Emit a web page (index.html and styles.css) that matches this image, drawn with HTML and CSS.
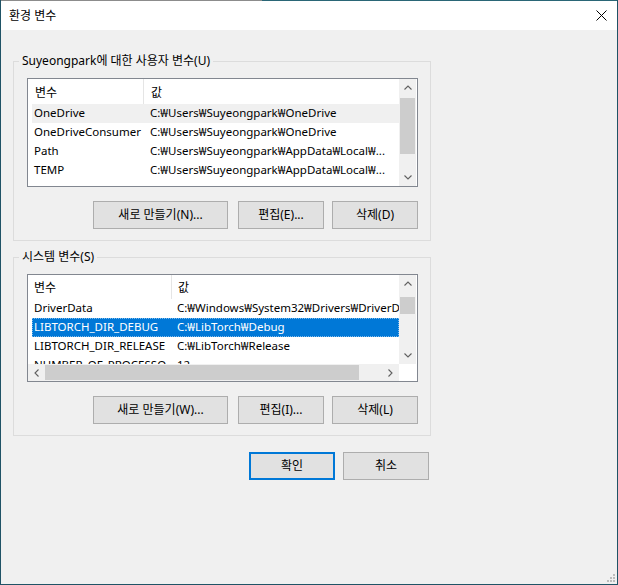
FILE: index.html
```html
<!DOCTYPE html>
<html lang="ko">
<head>
<meta charset="utf-8">
<title>환경 변수</title>
<link rel="stylesheet" href="styles.css">
</head>
<body>
<div class="window">
  <div class="titlebar">
    <span class="title">환경 변수</span>
    <svg class="close" width="11" height="11" viewBox="0 0 11 11"><path d="M0.5 0.5 L10.5 10.5 M10.5 0.5 L0.5 10.5" stroke="#000" stroke-width="1" fill="none"/></svg>
  </div>
  <div class="content">
    <fieldset class="group group--user">
      <legend>Suyeongpark에 대한 사용자 변수(U)</legend>
      <div class="lv lv--user">
        <div class="lv-main">
          <div class="lv-view">
            <div class="lv-head"><div class="hc hc1">변수</div><div class="hc">값</div></div>
            <div class="row row--inactive"><div class="c1">OneDrive</div><div class="c2">C:₩Users₩Suyeongpark₩OneDrive</div></div>
            <div class="row"><div class="c1">OneDriveConsumer</div><div class="c2">C:₩Users₩Suyeongpark₩OneDrive</div></div>
            <div class="row"><div class="c1">Path</div><div class="c2">C:₩Users₩Suyeongpark₩AppData₩Local₩...</div></div>
            <div class="row"><div class="c1">TEMP</div><div class="c2">C:₩Users₩Suyeongpark₩AppData₩Local₩...</div></div>
          </div>
          <div class="vscroll">
            <div class="sb-btn"><svg width="8" height="5" viewBox="0 0 8 5"><polyline points="0.5,4.5 4,1 7.5,4.5" fill="none" stroke="#606060" stroke-width="1.1"/></svg></div>
            <div class="sb-track"><div class="thumb thumb--user"></div></div>
            <div class="sb-btn"><svg width="8" height="5" viewBox="0 0 8 5"><polyline points="0.5,0.5 4,4 7.5,0.5" fill="none" stroke="#606060" stroke-width="1.1"/></svg></div>
          </div>
        </div>
      </div>
      <div class="btn-row">
        <button class="btn btn--wide">새로 만들기(N)...</button>
        <button class="btn">편집(E)...</button>
        <button class="btn">삭제(D)</button>
      </div>
    </fieldset>

    <fieldset class="group group--sys">
      <legend>시스템 변수(S)</legend>
      <div class="lv lv--sys">
        <div class="lv-main">
          <div class="lv-view">
            <div class="lv-head"><div class="hc hc1">변수</div><div class="hc">값</div></div>
            <div class="row"><div class="c1">DriverData</div><div class="c2">C:₩Windows₩System32₩Drivers₩DriverData</div></div>
            <div class="row row--selected"><div class="c1">LIBTORCH_DIR_DEBUG</div><div class="c2">C:₩LibTorch₩Debug</div></div>
            <div class="row"><div class="c1">LIBTORCH_DIR_RELEASE</div><div class="c2">C:₩LibTorch₩Release</div></div>
            <div class="row"><div class="c1">NUMBER_OF_PROCESSORS</div><div class="c2">12</div></div>
          </div>
          <div class="vscroll">
            <div class="sb-btn"><svg width="8" height="5" viewBox="0 0 8 5"><polyline points="0.5,4.5 4,1 7.5,4.5" fill="none" stroke="#606060" stroke-width="1.1"/></svg></div>
            <div class="sb-track"><div class="thumb thumb--sys"></div></div>
            <div class="sb-btn"><svg width="8" height="5" viewBox="0 0 8 5"><polyline points="0.5,0.5 4,4 7.5,0.5" fill="none" stroke="#606060" stroke-width="1.1"/></svg></div>
          </div>
        </div>
        <div class="hbar">
          <div class="hscroll">
            <div class="sb-btn sb-btn--h"><svg width="5" height="8" viewBox="0 0 5 8"><polyline points="4.5,0.5 1,4 4.5,7.5" fill="none" stroke="#606060" stroke-width="1.1"/></svg></div>
            <div class="sb-track sb-track--h"><div class="hthumb"></div></div>
            <div class="sb-btn sb-btn--h"><svg width="5" height="8" viewBox="0 0 5 8"><polyline points="0.5,0.5 4,4 0.5,7.5" fill="none" stroke="#606060" stroke-width="1.1"/></svg></div>
          </div>
          <div class="corner"></div>
        </div>
      </div>
      <div class="btn-row">
        <button class="btn btn--wide">새로 만들기(W)...</button>
        <button class="btn">편집(I)...</button>
        <button class="btn">삭제(L)</button>
      </div>
    </fieldset>

    <div class="dialog-buttons">
      <button class="btn btn--default">확인</button>
      <button class="btn">취소</button>
    </div>
  </div>
  <svg class="grip" width="9" height="9" viewBox="0 0 9 9">
    <rect x="7" y="1" width="2" height="2" fill="#bcbcbc"/>
    <rect x="4" y="4" width="2" height="2" fill="#bcbcbc"/>
    <rect x="7" y="4" width="2" height="2" fill="#bcbcbc"/>
    <rect x="1" y="7" width="2" height="2" fill="#bcbcbc"/>
    <rect x="4" y="7" width="2" height="2" fill="#bcbcbc"/>
    <rect x="7" y="7" width="2" height="2" fill="#bcbcbc"/>
  </svg>
</div>
</body>
</html>
```

FILE: styles.css
```css
* { box-sizing: border-box; }
html, body { margin: 0; padding: 0; }
body {
  width: 618px;
  height: 585px;
  overflow: hidden;
  background: #f0f0f0;
  font-family: "Noto Sans", "Noto Sans CJK KR", sans-serif;
  font-size: 12px;
  color: #000;
}
.window {
  position: relative;
  width: 618px;
  height: 585px;
  display: flex;
  flex-direction: column;
  border: 1px solid #1f5366;
  border-top: none;
  background: #f0f0f0;
}
.titlebar {
  height: 30px;
  flex: none;
  background-color: #fff;
  background-image: linear-gradient(to right, #8c8c8c 0, #8c8c8c 261px, #2a6676 261px, #2a6676 100%);
  background-size: 100% 1px;
  background-repeat: no-repeat;
  background-position: top left;
  display: flex;
  align-items: center;
  justify-content: space-between;
  padding: 1px 10px 0 8px;
}
.title { line-height: 16px; }
.close { display: block; }

.content {
  padding: 0 12px;
  display: flex;
  flex-direction: column;
}
.group {
  margin: 0;
  width: 418px;
  min-width: 0;
  border: 1px solid #dcdcdc;
  padding: 9px 12px 11px 13px;
}
.group--user { margin-top: 23px; }
.group--sys { margin-top: 8px; }
.group legend {
  padding: 0 3px;
  margin-left: -8px;
  line-height: 16px;
  height: 16px;
}

.lv {
  width: 391px;
  border: 1px solid #828790;
  background: #fff;
  display: flex;
  flex-direction: column;
  overflow: hidden;
}
.lv--user { height: 109px; --c1: 116px; --cw: 112px; --c2pad: 6px; }
.lv--sys { height: 108px; --c1: 144px; --cw: 134px; --c2pad: 11px; }
.lv-main {
  flex: 1;
  min-height: 0;
  display: flex;
}
.lv-view {
  flex: 1;
  min-width: 0;
  overflow: hidden;
}
.lv-head {
  display: flex;
  height: 25px;
  align-items: stretch;
}
.lv--sys .lv-head { height: 24px; }
.hc {
  padding-left: 7px;
  display: flex;
  align-items: center;
  white-space: nowrap;
}
.hc1 {
  width: var(--c1);
  flex: none;
  border-right: 1px solid #e5e5e5;
}
.lv--sys .hc { padding-left: 6px; }
.row {
  display: flex;
  height: 19px;
  line-height: 18px;
  margin-left: 4px;
  white-space: nowrap;
  font-size: 11.5px;
}
.row .c1 {
  width: var(--cw);
  flex: none;
  padding-left: 2px;
  overflow: hidden;
}
.row .c2 {
  padding-left: var(--c2pad);
  flex: none;
}
.row--inactive { background: #f0f0f0; }
.row--selected {
  background: #0078d7;
  color: #fff;
  outline: 1px dotted #7fbbeb;
  outline-offset: -1px;
}

.vscroll {
  width: 17px;
  margin-right: 1px;
  flex: none;
  display: flex;
  flex-direction: column;
  background: #f0f0f0;
}
.sb-btn {
  width: 17px;
  height: 17px;
  flex: none;
  display: flex;
  align-items: center;
  justify-content: center;
}
.sb-btn svg { display: block; }
.sb-track {
  flex: 1;
  min-height: 0;
  display: flex;
  flex-direction: column;
}
.thumb {
  background: #cdcdcd;
  margin: 0 1px;
}
.thumb--user { margin-top: 2px; height: 56px; }
.thumb--sys { margin-top: 5px; height: 17px; }

.hbar {
  height: 17px;
  flex: none;
  display: flex;
}
.hscroll {
  flex: 1;
  display: flex;
  background: #f0f0f0;
}
.sb-track--h {
  flex-direction: row;
  flex: 1;
}
.hthumb {
  width: 314px;
  background: #cdcdcd;
  margin: 1px 0;
}
.corner {
  width: 18px;
  flex: none;
  background: #fff;
}

.btn-row {
  display: flex;
  justify-content: flex-end;
  gap: 8px;
  margin-top: 14px;
}
.btn {
  height: 28px;
  width: 86px;
  padding: 0;
  margin: 0;
  background: #e1e1e1;
  border: 1px solid #adadad;
  font-family: inherit;
  font-size: 12px;
  color: #000;
  line-height: 16px;
}
.btn--wide { width: 135px; margin-right: 2px; }
.btn--default { border: 2px solid #0078d7; }
.dialog-buttons {
  width: 416px;
  display: flex;
  justify-content: flex-end;
  gap: 8px;
  margin-top: 16px;
}
.grip {
  position: absolute;
  right: 2px;
  bottom: 2px;
  display: block;
}
```
